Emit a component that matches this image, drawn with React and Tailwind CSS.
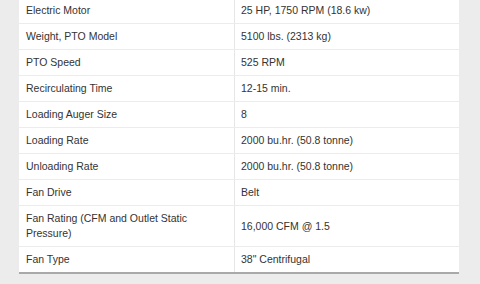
const specs = [
  ['Electric Motor', '25 HP, 1750 RPM (18.6 kw)'],
  ['Weight, PTO Model', '5100 lbs. (2313 kg)'],
  ['PTO Speed', '525 RPM'],
  ['Recirculating Time', '12-15 min.'],
  ['Loading Auger Size', '8'],
  ['Loading Rate', '2000 bu.hr. (50.8 tonne)'],
  ['Unloading Rate', '2000 bu.hr. (50.8 tonne)'],
  ['Fan Drive', 'Belt'],
  ['Fan Rating (CFM and Outlet Static Pressure)', '16,000 CFM @ 1.5'],
  ['Fan Type', '38" Centrifugal'],
];

export default function App() {
  return (
    <div
      className="w-[480px] h-[284px] overflow-hidden bg-[#ececec] pl-[19px]"
      style={{ fontFamily: '"Liberation Sans", Arial, sans-serif' }}
    >
      {/* tabla de especificaciones */}
      <div className="w-[440px] -mt-[2px] bg-white border-b-2 border-[#a9a9a9] text-[10.5px] leading-[15px] text-[#333]">
        {specs.map(([label, value], i) => (
          <div
            key={label}
            className={`grid grid-cols-[216px_1fr] ${i < specs.length - 1 ? 'border-b border-[#ececec]' : ''}`}
          >
            <div className="py-[5px] pl-[7px] pr-[8px] border-r border-[#e6e6e6] flex items-center">
              {label}
            </div>
            <div className="py-[5px] pl-[6px] pr-[8px] flex items-center">{value}</div>
          </div>
        ))}
      </div>
    </div>
  );
}
